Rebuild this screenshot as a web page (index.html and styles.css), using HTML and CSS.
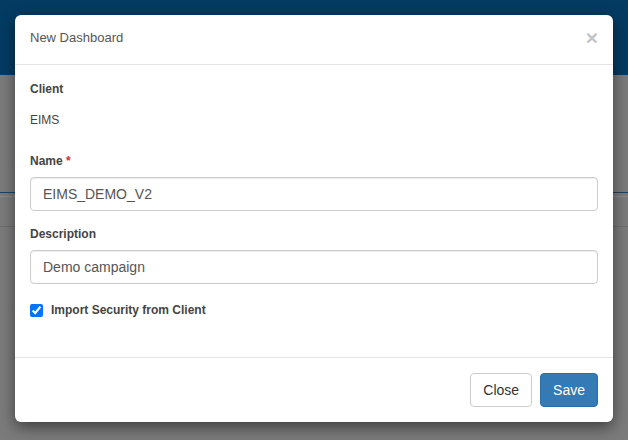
FILE: index.html
```html
<!DOCTYPE html>
<html lang="en">
<head>
    <meta charset="UTF-8">
    <meta name="viewport" content="width=device-width, initial-scale=1.0">
    <title>New Dashboard</title>
    <link rel="stylesheet" href="styles.css">
</head>
<body>

<!-- Page behind the overlay -->
<div class="page">
    <div class="page-header"></div>
    <div class="page-tabs"></div>
    <div class="page-row"></div>
</div>

<!-- Modal -->
<div class="modal">
    <div class="modal-header">
        <h4 class="modal-title">New Dashboard</h4>
        <button class="close" type="button">&times;</button>
    </div>

    <div class="modal-body">
        <div class="form-group">
            <label>Client</label>
            <p class="static">EIMS</p>
        </div>

        <div class="form-group">
            <label for="name">Name <span class="required">*</span></label>
            <input type="text" id="name" class="form-control" value="EIMS_DEMO_V2">
        </div>

        <div class="form-group">
            <label for="description">Description</label>
            <input type="text" id="description" class="form-control" value="Demo campaign">
        </div>

        <div class="checkbox">
            <input type="checkbox" id="importSecurity" checked>
            <label for="importSecurity">Import Security from Client</label>
        </div>
    </div>

    <div class="modal-footer">
        <button class="btn btn-default" type="button">Close</button>
        <button class="btn btn-primary" type="button">Save</button>
    </div>
</div>

</body>
</html>
```

FILE: styles.css
```css
* {
    box-sizing: border-box;
}
body {
    margin: 0;
    font-family: "Liberation Sans", Arial, sans-serif;
    font-size: 12px;
    color: #333;
    background-color: #7b7b7b;
    height: 440px;
    overflow: hidden;
}

/* Background page (dimmed) */
.page-header {
    height: 75px;
    background-color: #043b63;
}
.page-tabs {
    margin-top: 117px;
    height: 5px;
    border-top: 1px solid #1e4262;
    border-bottom: 1px solid #8c8c8c;
}
.page-row {
    margin-top: 29px;
    border-top: 1px solid #6e6e6e;
}

/* Modal */
.modal {
    position: absolute;
    top: 15px;
    left: 15px;
    width: 598px;
    background-color: #fff;
    border-radius: 6px;
    box-shadow: 0 5px 15px rgba(0, 0, 0, 0.5);
}
.modal-header {
    display: flex;
    justify-content: space-between;
    align-items: center;
    padding: 13px 15px 17px;
    border-bottom: 1px solid #e5e5e5;
}
.modal-title {
    margin: 0;
    font-size: 13px;
    font-weight: normal;
    line-height: 19px;
    color: #555;
}
.close {
    padding: 0;
    border: none;
    background: none;
    font-family: "Liberation Sans", Arial, sans-serif;
    font-size: 21px;
    font-weight: bold;
    line-height: 19px;
    color: #c4c4c4;
    cursor: pointer;
}

.modal-body {
    padding: 16px 15px 0;
}
.form-group {
    margin-bottom: 15px;
}
label {
    display: block;
    margin-bottom: 7px;
    font-weight: bold;
    line-height: 17px;
    color: #444;
}
.required {
    color: #c9302c;
}
.static {
    margin: 0;
    padding: 7px 0 9px;
    line-height: 17px;
    color: #444;
}
.form-control {
    display: block;
    width: 100%;
    height: 34px;
    padding: 6px 12px;
    font-family: "Liberation Sans", Arial, sans-serif;
    font-size: 14px;
    color: #555;
    border: 1px solid #ccc;
    border-radius: 4px;
    box-shadow: inset 0 1px 1px rgba(0, 0, 0, 0.075);
}

.checkbox {
    display: flex;
    align-items: center;
    margin-top: 18px;
    padding-bottom: 38px;
}
.checkbox input {
    width: 13px;
    height: 13px;
    margin: 0 8px 0 0;
    accent-color: #0075ff;
}
.checkbox label {
    margin: 0;
}

.modal-footer {
    display: flex;
    justify-content: flex-end;
    gap: 8px;
    padding: 15px;
    border-top: 1px solid #e5e5e5;
}
.btn {
    padding: 6px 12px;
    font-family: "Liberation Sans", Arial, sans-serif;
    font-size: 14px;
    line-height: 20px;
    border: 1px solid transparent;
    border-radius: 4px;
    cursor: pointer;
}
.btn-default {
    color: #333;
    background-color: #fff;
    border-color: #ccc;
}
.btn-primary {
    color: #fff;
    background-color: #337ab7;
    border-color: #2e6da4;
}
```
